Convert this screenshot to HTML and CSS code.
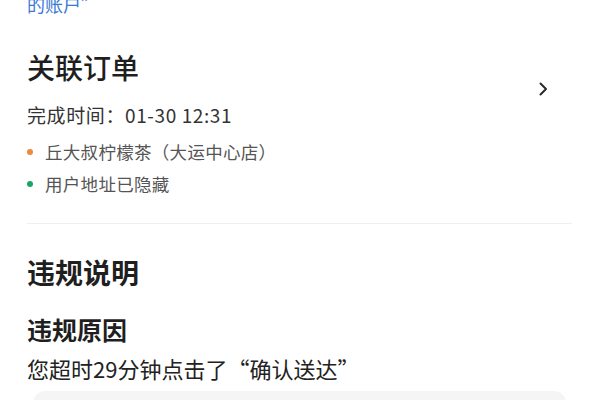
FILE: index.html
```html
<!DOCTYPE html>
<html lang="zh-CN">
<head>
<meta charset="utf-8">
<title>关联订单</title>
<link rel="stylesheet" href="styles.css">
</head>
<body>
<div class="page">
  <div class="top-link">的账户”</div>

  <section class="order">
    <div class="order-head">
      <div class="order-main">
        <h2 class="title">关联订单</h2>
        <div class="time">完成时间：01-30 12:31</div>
      </div>
      <svg class="chevron" width="12" height="16" viewBox="0 0 12 16" aria-hidden="true">
        <path d="M3.5 2.5 L9 8 L3.5 13.5" fill="none" stroke="#2a2a2a" stroke-width="2" stroke-linecap="round" stroke-linejoin="round"/>
      </svg>
    </div>
    <ul class="points">
      <li class="point"><span class="dot dot-orange"></span>丘大叔柠檬茶（大运中心店）</li>
      <li class="point"><span class="dot dot-green"></span>用户地址已隐藏</li>
    </ul>
  </section>

  <div class="divider"></div>

  <section class="violation">
    <h2 class="title bold">违规说明</h2>
    <h3 class="subtitle">违规原因</h3>
    <p class="reason">您超时29分钟点击了“确认送达”</p>
    <div class="gray-box"></div>
  </section>
</div>
</body>
</html>
```

FILE: styles.css
```css
* { box-sizing: border-box; }
html, body {
  margin: 0;
  padding: 0;
  background: #ffffff;
  overflow: hidden;
}
body {
  font-family: "Noto Sans CJK SC", "Noto Sans", sans-serif;
  color: #1f1f1f;
}
.page {
  padding: 0 28px 0 27px;
}
.top-link {
  margin-top: -8px;
  font-size: 18px;
  line-height: 24px;
  color: #3a78d4;
}
.order {
  margin-top: 33px;
}
.order-head {
  display: flex;
  align-items: center;
  justify-content: space-between;
}
.title {
  margin: 0;
  font-size: 28px;
  line-height: 36px;
  font-weight: 500;
  color: #1f1f1f;
}
.title.bold {
  font-weight: 700;
}
.time {
  margin-top: 17px;
  font-size: 19px;
  line-height: 26px;
  letter-spacing: 0.6px;
  color: #333333;
}
.chevron {
  margin-right: 23px;
  display: block;
}
.points {
  list-style: none;
  margin: 8px 0 0 0;
  padding: 0;
}
.point {
  display: flex;
  align-items: center;
  font-size: 17.5px;
  line-height: 32px;
  letter-spacing: 0.3px;
  color: #555555;
}
.dot {
  width: 6px;
  height: 6px;
  border-radius: 50%;
  margin-right: 12px;
  flex: none;
}
.dot-orange { background: #f0883a; }
.dot-green { background: #16a862; }
.divider {
  margin-top: 23px;
  height: 1px;
  background: #efefef;
}
.violation {
  margin-top: 30px;
}
.subtitle {
  margin: 23px 0 0 0;
  font-size: 25px;
  line-height: 32px;
  font-weight: 600;
  color: #1f1f1f;
}
.reason {
  margin: 8px 0 0 0;
  font-size: 22px;
  line-height: 30px;
  color: #222222;
}
.gray-box {
  margin: 8px 6px 0 6px;
  height: 60px;
  border-radius: 12px;
  background: #f5f5f5;
}
```
